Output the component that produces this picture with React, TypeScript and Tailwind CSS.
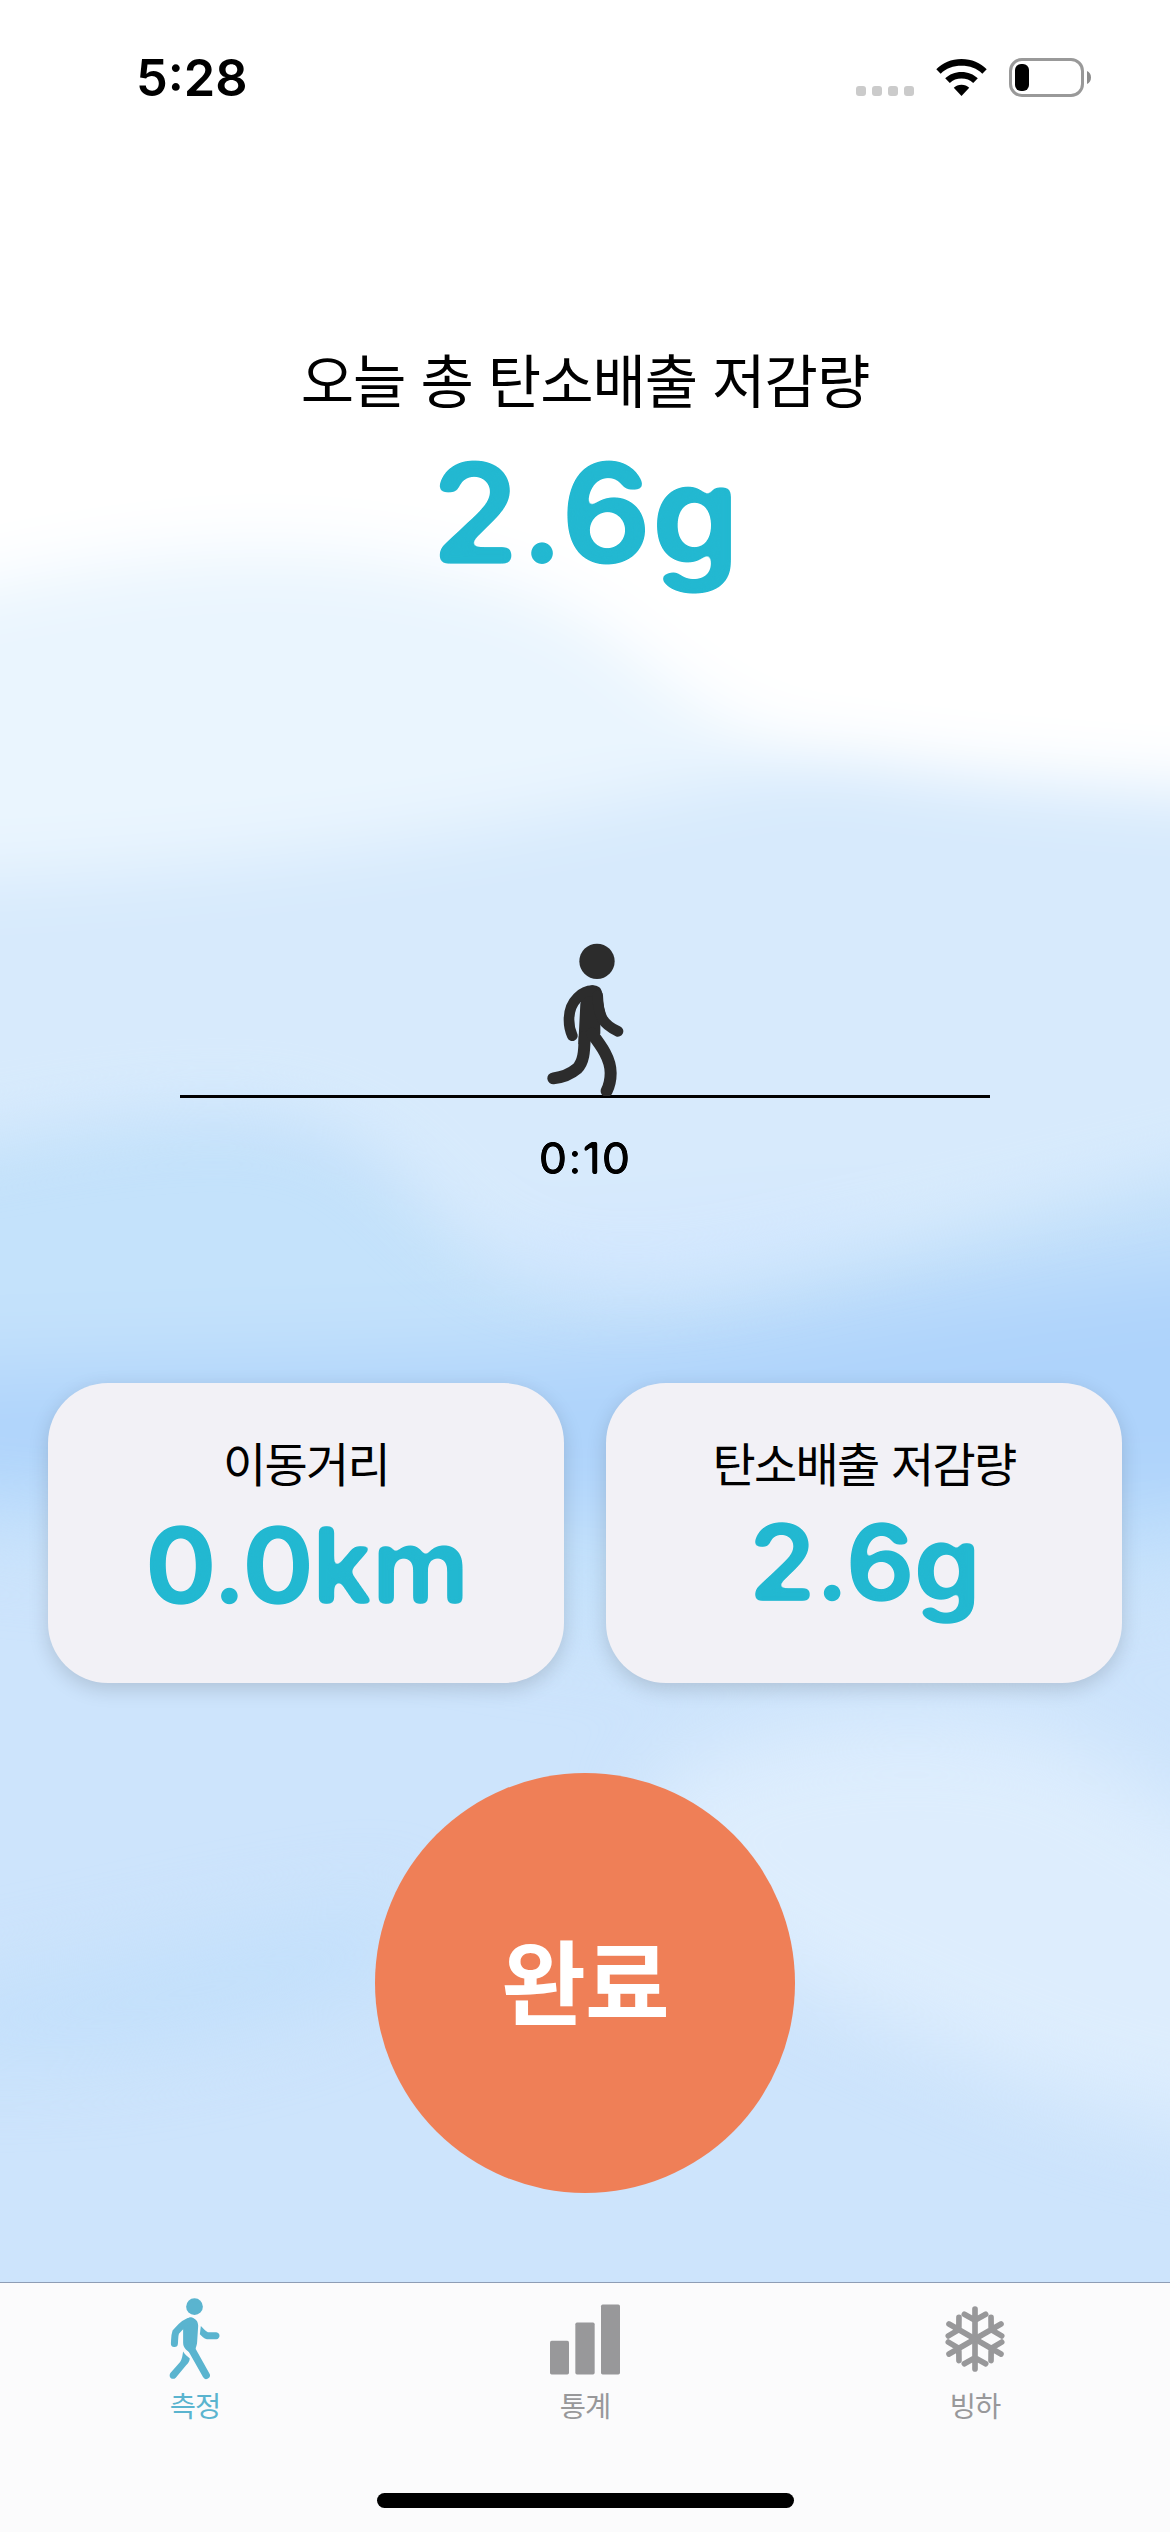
import React from "react";

const latin = "font-['Inter','Noto_Sans_CJK_KR',sans-serif]";
const korean = "font-['Noto_Sans_CJK_KR',sans-serif]";

function RoundingFilters() {
  return (
    <svg className="absolute h-0 w-0" aria-hidden="true">
      <filter id="round-lg" x="-5%" y="-5%" width="110%" height="110%" colorInterpolationFilters="sRGB">
        <feGaussianBlur stdDeviation="4.2" />
        <feComponentTransfer>
          <feFuncA type="linear" slope="12" intercept="-5.9" />
        </feComponentTransfer>
      </filter>
      <filter id="round-md" x="-5%" y="-5%" width="110%" height="110%" colorInterpolationFilters="sRGB">
        <feGaussianBlur stdDeviation="3.2" />
        <feComponentTransfer>
          <feFuncA type="linear" slope="9" intercept="-4.2" />
        </feComponentTransfer>
      </filter>
      <filter id="round-sm" x="-5%" y="-5%" width="110%" height="110%" colorInterpolationFilters="sRGB">
        <feGaussianBlur stdDeviation="1.2" />
        <feComponentTransfer>
          <feFuncA type="linear" slope="4" intercept="-1.4" />
        </feComponentTransfer>
      </filter>
    </svg>
  );
}

function Sky() {
  return (
    <svg className="absolute inset-0 h-full w-full" viewBox="0 0 1170 2532" preserveAspectRatio="none" aria-hidden="true">
      <defs>
        <filter id="soft" filterUnits="userSpaceOnUse" x="-300" y="-300" width="1770" height="3132" colorInterpolationFilters="sRGB">
          <feGaussianBlur stdDeviation="32" />
        </filter>
        <filter id="softer" filterUnits="userSpaceOnUse" x="-300" y="-300" width="1770" height="3132" colorInterpolationFilters="sRGB">
          <feGaussianBlur stdDeviation="34 42" />
        </filter>
      </defs>
      <rect width="1170" height="2532" fill="#cde4fc" />
      <g filter="url(#softer)">
        <path d="M-200 1000H1370V1560C1100 1570 900 1650 700 1640C400 1620 200 1530 -200 1530Z" fill="#c4e1fb" />
        <path d="M-200 1385C100 1360 400 1370 640 1345C800 1330 1000 1275 1370 1250V1500C1000 1540 300 1490 -200 1490Z" fill="#aed3fb" />
        <path d="M-200 1130C100 1100 400 1130 560 1330C400 1350 100 1340 -200 1320Z" fill="#c4e2fb" />
        <path d="M640 1800C740 1710 950 1700 1060 1740C1130 1770 1250 1860 1370 1890V2150C1100 2130 1000 2070 860 2010C760 1970 640 1890 640 1800Z" fill="#ddedfd" />
        <path d="M-100 2005C60 1985 220 1930 400 1915C440 1960 340 2010 160 2040C40 2060 -60 2050 -100 2050Z" fill="#c1dffb" />
      </g>
      <g filter="url(#soft)">
        <path d="M-200 700H1370V1130C1120 1190 1000 1220 800 1265C680 1295 580 1300 500 1265C400 1210 400 1130 250 1115C100 1110 0 1150 -200 1170Z" fill="#d7eafc" />
        <path d="M480 1220C650 1220 780 1190 900 1200C800 1260 640 1300 540 1270Z" fill="#d3e7fe" />
        <path d="M-200 400H900V755C650 780 450 870 -200 885Z" fill="#eaf5fe" />
        <path d="M-200 -200H1370V805C1100 785 900 780 780 745C640 695 640 620 480 580C280 530 120 550 -200 630Z" fill="#ffffff" />
      </g>
    </svg>
  );
}

function StatusBar() {
  return (
    <header className="flex h-[160px] items-start justify-between pl-[136px] pr-[79px]">
      <span className={`mt-[53px] text-[50.500px] leading-[50px] font-semibold text-black ${latin}`}>5:28</span>
      <div className="mt-[58px] flex h-[39px]">
        <div className="mr-[22px] flex items-end gap-[6px] pb-px">
          {[0, 1, 2, 3].map((i) => (
            <span key={i} className="size-[10px] rounded-[3px] bg-[#cbcbcb]" />
          ))}
        </div>
        <svg className="mr-[22px] h-[39px] w-[51px]" viewBox="0 0 51 39" aria-hidden="true">
          <path d="M25.5 1C35.700 1 44.500 5 50.700 11.300L46.300 15.700C41 10.400 33.700 7.800 25.500 7.800S10 10.400 4.700 15.700L.3 11.300C6.500 5 15.300 1 25.500 1Z" />
          <path d="M25.500 14C32 14 37.600 16.300 41.800 20.300L37.200 24.900C34.100 22 30.100 20.600 25.500 20.600S16.900 22 13.800 24.900L9.200 20.300C13.400 16.300 19 14 25.500 14Z" />
          <path d="M25.500 26.800C28.600 26.800 31.200 27.900 33.200 29.700L25.500 38L17.800 29.700C19.800 27.900 22.400 26.800 25.500 26.800Z" />
        </svg>
        <div className="flex items-center">
          <div className="h-[39px] w-[75px] rounded-[13px] border-[3px] border-[#999] p-[3px]">
            <div className="h-[27px] w-[14px] rounded-[6px] bg-black" />
          </div>
          <svg className="ml-[3px] h-[13px] w-[4px]" viewBox="0 0 4 13" aria-hidden="true">
            <path d="M0 0C2.500 1 4 3.500 4 6.500S2.500 12 0 13Z" fill="#8c8c8c" />
          </svg>
        </div>
      </div>
    </header>
  );
}

function Walker() {
  return (
    <svg className="h-[152.700px] w-[77px]" viewBox="200 68 231 458" fill="none" stroke="#2c2c2c" strokeLinecap="round" strokeLinejoin="round" aria-hidden="true">
      <circle cx="350" cy="123" r="53" fill="#2c2c2c" stroke="none" />
      <path d="M300 250C310 215 320 196 336 195C353 195 365 203 366 222C368 245 370 262 376 280L360 311V340L331 362L294 372Z" fill="#2c2c2c" stroke="none" />
      <path d="M336 211C310 211 266 238 266 298C266 318 270 333 276 346" strokeWidth="32" />
      <path d="M352 225C354 290 368 312 413 333" strokeWidth="32" />
      <path d="M313 350C312 395 310 425 290 445C270 462 246 471 219 474" strokeWidth="36" />
      <path d="M335 340C362 376 391 414 391 458C391 480 387 496 379 512" strokeWidth="36" />
    </svg>
  );
}

function StatCard({ label, value, lift }: { label: string; value: string; lift?: boolean }) {
  return (
    <section className="flex h-[300px] flex-1 flex-col items-center rounded-[60px] bg-[#f2f1f6] pt-[51px] shadow-[0_6px_20px_rgba(0,0,0,0.15)]">
      <h2 className={`text-[47px] leading-[56px] font-normal tracking-[-1.800px] [word-spacing:4px] text-black ${korean}`}>{label}</h2>
      <p className={`${lift ? "mt-[17px] tracking-[-1.500px]" : "mt-[20px] tracking-[-2.200px]"} text-[107px] leading-[110px] font-bold text-[#22b8d1] [filter:url(#round-md)] ${latin}`}>
        {value}
      </p>
    </section>
  );
}

function TabWalk() {
  return (
    <svg className="h-[82px] w-[52px]" viewBox="118 85 155 245" fill="none" stroke="#5ab4cf" strokeLinecap="round" strokeLinejoin="round" aria-hidden="true">
      <circle cx="194" cy="111" r="25" fill="#5ab4cf" stroke="none" />
      <path d="M160 172C163 150 172 143 183 143C197 145 205 154 205 168L202 215C202 225 198 232 197 237L180 248C168 240 160 232 160 218Z" fill="#5ab4cf" stroke="none" />
      <path d="M183 154C164 156 148 176 138 187C134 198 135 208 134 221" strokeWidth="21" />
      <path d="M178 225L229 316" strokeWidth="22" />
      <path d="M160 245C165 253 172 259 180 266C179 276 174 281 169 286L138 323C129 332 114 322 122 309L151 276C157 268 158 258 160 245Z" fill="#5ab4cf" stroke="none" />
      <path d="M213 169C220 176 226 184 234 187H259C272 188 272 207 259 208H231C222 206 216 199 210 193Z" fill="#5ab4cf" stroke="none" />
    </svg>
  );
}

function TabBars() {
  return (
    <svg className="h-[71px] w-[70px]" viewBox="90 104 210 212" fill="#98989a" aria-hidden="true">
      <rect x="90" y="214" width="57" height="101" rx="5" />
      <rect x="166" y="159" width="58" height="156" rx="5" />
      <rect x="243" y="105" width="57" height="210" rx="5" />
    </svg>
  );
}

function TabSnow() {
  return (
    <svg className="h-[66px] w-[60px]" viewBox="-90 -99 180 198" fill="none" stroke="#98989a" strokeWidth="17" strokeLinecap="round" aria-hidden="true">
      {[0, 60, 120, 180, 240, 300].map((a) => (
        <path key={a} transform={`rotate(${a})`} d="M0 0V-90M-32 -74L0 -56L32 -74" />
      ))}
    </svg>
  );
}

function Tab({ icon, label, active }: { icon: React.ReactNode; label: string; active?: boolean }) {
  return (
    <button className="flex flex-1 flex-col items-center">
      <span className="mt-[6px] flex h-[100px] items-center justify-center">{icon}</span>
      <span className={`-mt-px text-[28.500px] leading-[34px] tracking-[-1px] ${korean} ${active ? "text-[#5ab4cf]" : "text-[#98989a]"}`}>
        {label}
      </span>
    </button>
  );
}

export default function App() {
  return (
    <div className="relative h-[2532px] w-[1170px] overflow-hidden bg-white">
      <Sky />
      <RoundingFilters />
      <div className="relative flex h-full flex-col">
        <StatusBar />
        <main className="flex flex-1 flex-col items-center">
          <h1 className={`mt-[183px] text-[58px] leading-[70px] font-normal tracking-[-1px] [word-spacing:3px] text-black ${korean}`}>오늘 총 탄소배출 저감량</h1>
          <p className={`mt-[29px] text-[141px] leading-[142px] font-bold tracking-[-1px] text-[#22b8d1] [filter:url(#round-lg)] ${latin}`}>2.6g</p>
          <div className="mt-[359px] flex h-[155px] w-[810px] items-start justify-center border-b-[3px] border-black">
            <Walker />
          </div>
          <p className={`mt-[35px] text-[44px] leading-[50px] font-medium tracking-[1px] text-black [filter:url(#round-sm)] ${latin}`}>0:10</p>
          <div className="mt-[200px] flex w-full gap-[42px] px-[48px]">
            <StatCard label="이동거리" value="0.0km" />
            <StatCard label="탄소배출 저감량" value="2.6g" lift />
          </div>
          <button className={`mt-[90px] flex size-[420px] items-center justify-center rounded-full bg-[#ef7f57] pb-[10px] text-[92px] leading-none font-bold tracking-[-1px] text-white ${korean}`}>
            완료
          </button>
        </main>
        <nav className="flex h-[250px] flex-col items-center border-t border-[#8e9db5] bg-[#fbfbfc]">
          <div className="flex w-full flex-1">
            <Tab icon={<TabWalk />} label="측정" active />
            <Tab icon={<TabBars />} label="통계" />
            <Tab icon={<TabSnow />} label="빙하" />
          </div>
          <div className="mb-[24px] h-[15px] w-[417px] rounded-full bg-black" />
        </nav>
      </div>
    </div>
  );
}
